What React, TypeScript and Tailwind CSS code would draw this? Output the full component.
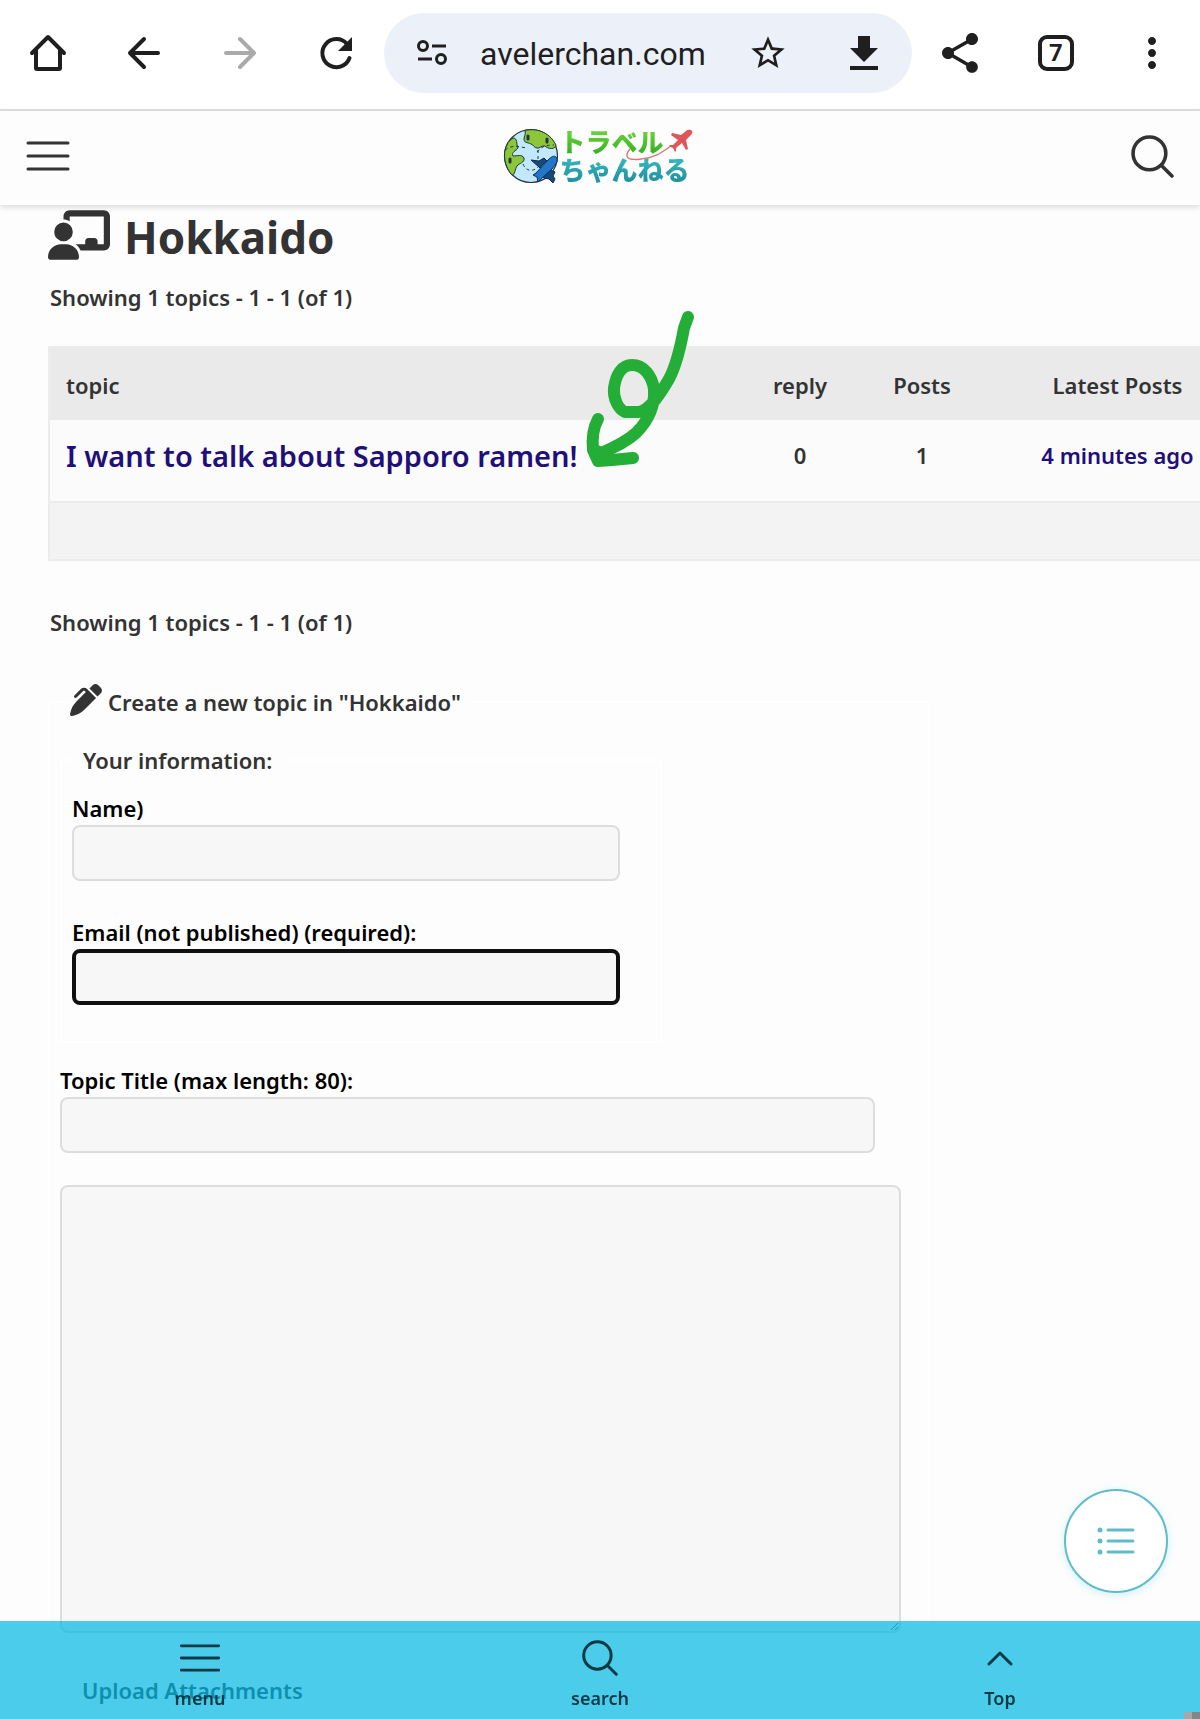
import type { ReactNode } from "react";
import { FaChalkboardUser, FaPenClip } from "react-icons/fa6";
import { MdMoreVert, MdShare, MdStarBorder } from "react-icons/md";

type TopicRow = {
  title: string;
  replies: number;
  posts: number;
  latest: string;
};

const TOPICS: TopicRow[] = [
  { title: "I want to talk about Sapporo ramen!", replies: 0, posts: 1, latest: "4 minutes ago" },
];

function BarButton({ label, children }: { label: string; children: ReactNode }) {
  return (
    <button type="button" aria-label={label} className="flex h-20 w-24 shrink-0 items-center justify-center">
      {children}
    </button>
  );
}

function BrowserBar() {
  return (
    <div className="flex h-[111px] items-start border-b-2 border-[#e0e0e0] bg-white pt-[13px] text-[#1f1f1f]">
      <BarButton label="Home">
        <svg width="48" height="48" viewBox="0 0 48 48" fill="none" stroke="currentColor" strokeWidth="4" strokeLinecap="round" strokeLinejoin="round">
          <path d="M8 24 24 8l16 16M12 21v18a1 1 0 0 0 1 1h22a1 1 0 0 0 1-1V21" />
        </svg>
      </BarButton>
      <BarButton label="Back">
        <svg width="48" height="48" viewBox="0 0 48 48" fill="none" stroke="currentColor" strokeWidth="4" strokeLinecap="round" strokeLinejoin="round">
          <path d="M24 10 10 24l14 14M10 24h28" />
        </svg>
      </BarButton>
      <BarButton label="Forward">
        <svg width="48" height="48" viewBox="0 0 48 48" fill="none" stroke="#aaaaaa" strokeWidth="4" strokeLinecap="round" strokeLinejoin="round">
          <path d="m24 10 14 14-14 14M38 24H10" />
        </svg>
      </BarButton>
      <BarButton label="Reload">
        <svg width="48" height="48" viewBox="0 0 48 48" fill="none">
          <path d="M37.5 29A14 14 0 1 1 35 15" stroke="currentColor" strokeWidth="4" strokeLinecap="round" />
          <path d="M40 8v14H26z" fill="currentColor" />
        </svg>
      </BarButton>
      <div className="flex h-20 min-w-0 flex-1 items-center rounded-full bg-[#ecf0f9]">
        <BarButton label="Site information">
          <svg width="32" height="28" viewBox="0 0 32 28" fill="none" stroke="currentColor" strokeWidth="3">
            <circle cx="7" cy="7" r="4.5" />
            <path d="M16 7h14M2 20h14" />
            <circle cx="25" cy="20" r="4.5" />
          </svg>
        </BarButton>
        <div className="min-w-0 flex-1 overflow-hidden whitespace-nowrap pt-[2px] font-[Roboto,sans-serif] text-[32px] leading-10 font-normal">
          avelerchan.com
        </div>
        <BarButton label="Bookmark">
          <MdStarBorder size={40} />
        </BarButton>
        <BarButton label="Download">
          <svg width="28" height="36" viewBox="0 0 28 36" fill="currentColor">
            <path d="M8 1h12v12h8L14 27 0 13h8zM0 31h28v4H0z" />
          </svg>
        </BarButton>
      </div>
      <BarButton label="Share">
        <MdShare size={48} />
      </BarButton>
      <BarButton label="Tabs">
        <span className="flex h-9 w-9 items-center justify-center rounded-[9px] border-4 border-[#1f1f1f] font-[Roboto,sans-serif] text-2xl font-bold">
          7
        </span>
      </BarButton>
      <BarButton label="More">
        <MdMoreVert size={48} />
      </BarButton>
    </div>
  );
}

function Logo() {
  return (
    <a href="#" aria-label="トラベルちゃんねる" className="relative mr-1 flex items-center">
      <svg width="56" height="56" viewBox="0 0 56 56">
        <circle cx="28" cy="28" r="26.5" fill="#c4e8fb" stroke="#20343c" strokeWidth="1.2" />
        <path d="M22 2.5C32 0 46 3 53 17c-1 5-8 4-11 1-4-1-5 3-8 2-3 0-3-3-6-4-4-2-7-1-7-5 0-3 2-4 1-8.5z" fill="#8cc63a" stroke="#20343c" />
        <path d="M10 10c5 0 3 6 5 10-2 3-7 4-5 8 4 0 9-2 11 2 1 5-5 5-7 8s-2 9-5 9C2 40-1 25 4 17c1-4 4-5 6-7z" fill="#8cc63a" stroke="#20343c" />
        <path d="M2 22c8-6 14-3 22-2M34 24c5-6 9-7 17-7M20 36c3 8 11 8 16 2M35 22v10" fill="none" stroke="#20343c" strokeDasharray="3 3" />
        <path d="M25 11v-3m19 6v-3M7 34v-3" stroke="#20343c" strokeWidth="3" strokeLinecap="round" />
        <path d="m28 32 8 1 5-3 3 3-4 3-3 4zM44 41l8 3-2 4 2 3-2 4-4-4-5-1-3-4z" fill="#164a7f" stroke="#0c2c50" />
        <path d="M53 29c3 3 0 7-4 12L37 52l-2 2-1-5-4-2 3-2 12-13c3-3 6-5 8-3z" fill="#2377ca" stroke="#0c2c50" />
      </svg>
      <span className="flex flex-col pr-1 pb-[2px] font-['Noto_Sans_CJK_JP',sans-serif] text-[26px] font-black leading-7">
        <span className="bg-gradient-to-b from-[#71dc3d] to-[#31ad20] bg-clip-text text-transparent">トラベル</span>
        <span className="bg-gradient-to-b from-[#36bdc5] to-[#218f9e] bg-clip-text text-transparent">ちゃんねる</span>
      </span>
      <svg className="absolute top-[2px] right-0" width="70" height="34" viewBox="0 0 70 34">
        <path d="M6 20c-7 8-2 12 11 10 13-1 20-6 30-13" fill="none" stroke="#d77a76" strokeWidth="1.5" />
        <path d="M68 2c1 1 0 3-2 5l-4 4 2 9-2 1-4-7-6 5v3l-1 1-2-4-4-2 1-1h3l5-5-7-5 1-2 9 2 5-4c3-2 5-1 6 0z" fill="#df5558" />
      </svg>
    </a>
  );
}

function MenuLines({ className }: { className: string }) {
  return (
    <svg className={className} viewBox="0 0 44 30" fill="none" stroke="currentColor" strokeWidth="3" strokeLinecap="round">
      <path d="M2 2h40M2 15h40M2 28h40" />
    </svg>
  );
}

function SearchGlyph({ className }: { className: string }) {
  return (
    <svg className={className} viewBox="0 0 42 42" fill="none" stroke="currentColor" strokeWidth="3.5" strokeLinecap="round">
      <circle cx="18" cy="18" r="16" />
      <path d="m30 30 10 10" />
    </svg>
  );
}

function SiteHeader() {
  return (
    <header className="relative flex h-[94px] items-center justify-between bg-[#fdfdfd] px-[26px] pb-1 shadow-[0_2px_6px_rgba(0,0,0,0.15)]">
      <button type="button" aria-label="Open menu">
        <MenuLines className="h-[30px] w-11" />
      </button>
      <Logo />
      <button type="button" aria-label="Search">
        <SearchGlyph className="size-[43px]" />
      </button>
    </header>
  );
}

function TopicTable() {
  return (
    <div className="relative mt-[33px] ml-12">
      <div className="overflow-hidden">
        <table className="w-[calc(100%+54px)] table-fixed border-collapse border-2 border-[#ececec]">
          <colgroup>
            <col />
            <col className="w-[122px]" />
            <col className="w-[122px]" />
            <col className="w-[270px]" />
          </colgroup>
          <thead>
            <tr className="h-[73px] bg-[#eaeaea]">
              <th className="pt-[2px] pl-4 text-left font-semibold">topic</th>
              <th className="pt-[2px] font-semibold">reply</th>
              <th className="pt-[2px] font-semibold">Posts</th>
              <th className="pt-[2px] font-semibold">Latest Posts</th>
            </tr>
          </thead>
          <tbody>
            {TOPICS.map((topic) => (
              <tr key={topic.title} className="h-[82px] border-b-2 border-[#ececec] bg-[#fbfbfb]">
                <td className="pb-[10px] pl-4 text-[29px] font-semibold">
                  <a href="#" className="text-[#1f0f78]">{topic.title}</a>
                </td>
                <td className="pb-[10px] text-center">{topic.replies}</td>
                <td className="pb-[10px] text-center">{topic.posts}</td>
                <td className="pb-[10px] text-center">
                  <a href="#" className="text-[#1f0f78]">{topic.latest}</a>
                </td>
              </tr>
            ))}
          </tbody>
          <tfoot>
            <tr className="h-[58px] bg-[#f3f3f3]">
              <td colSpan={4} />
            </tr>
          </tfoot>
        </table>
      </div>
      {/* Marker scribble pointing at the first topic */}
      <svg className="pointer-events-none absolute -top-10 left-[532px]" width="120" height="170" viewBox="580 306 120 170" fill="none" stroke="#24ad37" strokeWidth="12" strokeLinecap="round" strokeLinejoin="round">
        <path d="M688 317 684 328C680 350 676 366 669 379 662 391 650 411 638 412H625C618 409 613 398 614 388 616 374 622 365 632 365 644 365 652 376 654 389 655 404 649 420 636 433 625 443 611 449 599 454" />
        <path d="M598 419C592 430 592 440 593 450L598 461 612 460 633 458M597 451 606 457" />
      </svg>
    </div>
  );
}

const FIELD = "block h-14 w-full rounded-lg border-2 border-[#dddddd] bg-[#f7f7f7] px-3 outline-none";

function NewTopicForm() {
  return (
    <form className="mt-[46px] ml-12">
      <fieldset className="max-w-[882px] border-2 border-white px-[10px]">
        <legend className="ml-[10px] flex h-9 items-center gap-[6px] pr-2">
          <FaPenClip size={32} className="-mt-1" />
          Create a new topic in "Hokkaido"
        </legend>
        <fieldset className="mt-6 max-w-[602px] border-2 border-white px-[10px] pb-9">
          <legend className="px-[11px] leading-8">Your information:</legend>
          <label htmlFor="name" className="mt-4 block leading-8 text-black">Name)</label>
          <input id="name" type="text" className={`${FIELD} mt-px max-w-[548px]`} />
          <label htmlFor="email" className="mt-[35px] block leading-8 text-black">
            Email (not published) (required):
          </label>
          <input id="email" type="email" className="mt-px block h-14 w-full max-w-[548px] rounded-lg border-4 border-[#101010] bg-[#f7f7f7] px-3 outline-none" />
        </fieldset>
        <label htmlFor="title" className="mt-[21px] block leading-8 text-black">
          Topic Title (max length: 80):
        </label>
        <input id="title" type="text" maxLength={80} className={`${FIELD} mt-px max-w-[815px]`} />
        <textarea
          aria-label="Topic content"
          className="mt-8 block h-[448px] w-full max-w-[841px] rounded-lg border-2 border-[#dddddd] bg-[#f7f7f7] p-3 outline-none"
        />
        <a href="#" className="mt-[41px] ml-[22px] inline-block leading-8">Upload Attachments</a>
      </fieldset>
    </form>
  );
}

function NavItem({ label, children }: { label: string; children: ReactNode }) {
  return (
    <button type="button" className="flex flex-col items-center justify-end pb-[9px]">
      <span className="flex h-10 items-center">{children}</span>
      <span className="mt-2">{label}</span>
    </button>
  );
}

function BottomNav() {
  return (
    <nav className="fixed inset-x-0 bottom-0 grid h-[98px] grid-cols-3 bg-[#00b7e3]/70 text-lg leading-6 font-semibold text-[#0a3a46]">
      <NavItem label="menu">
        <MenuLines className="h-7 w-[42px]" />
      </NavItem>
      <NavItem label="search">
        <SearchGlyph className="size-9" />
      </NavItem>
      <NavItem label="Top">
        <svg width="26" height="16" viewBox="0 0 26 16" fill="none" stroke="currentColor" strokeWidth="3" strokeLinecap="round" strokeLinejoin="round">
          <path d="M2 14 13 3l11 11" />
        </svg>
      </NavItem>
      <span className="absolute right-0 bottom-0 h-[7px] w-4 border-r-8 border-[#858585] bg-[#aaa5a8]" />
    </nav>
  );
}

function ContentsButton() {
  return (
    <button
      type="button"
      aria-label="Table of contents"
      className="fixed right-8 bottom-[126px] flex size-[104px] items-center justify-center rounded-full border-2 border-[#5fbccb] bg-white text-[#5fbccb] shadow-[0_2px_8px_rgba(80,200,220,0.25)]"
    >
      <svg width="38" height="28" viewBox="0 0 38 28" fill="none" stroke="currentColor" strokeLinecap="round">
        <path d="M11 3h25M11 14h25M11 25h25" strokeWidth="3" />
        <path d="M3 3h.01M3 14h.01M3 25h.01" strokeWidth="5" />
      </svg>
    </button>
  );
}

export default function App() {
  return (
    <div className="min-h-screen overflow-x-hidden bg-[#fdfdfd] font-['Noto_Sans',sans-serif] text-[22px] font-semibold text-[#333333]">
      <BrowserBar />
      <SiteHeader />
      <main>
        <h1 className="mt-[5px] ml-12 flex h-[50px] items-center gap-[14px] text-[44px] font-bold">
          <FaChalkboardUser className="h-[50px] w-[62px]" />
          <span className="pt-1">Hokkaido</span>
        </h1>
        <p className="mt-[21px] ml-[50px] leading-8">Showing 1 topics - 1 - 1 (of 1)</p>
        <TopicTable />
        <p className="mt-[45px] ml-[50px] leading-8">Showing 1 topics - 1 - 1 (of 1)</p>
        <NewTopicForm />
      </main>
      <ContentsButton />
      <BottomNav />
    </div>
  );
}
